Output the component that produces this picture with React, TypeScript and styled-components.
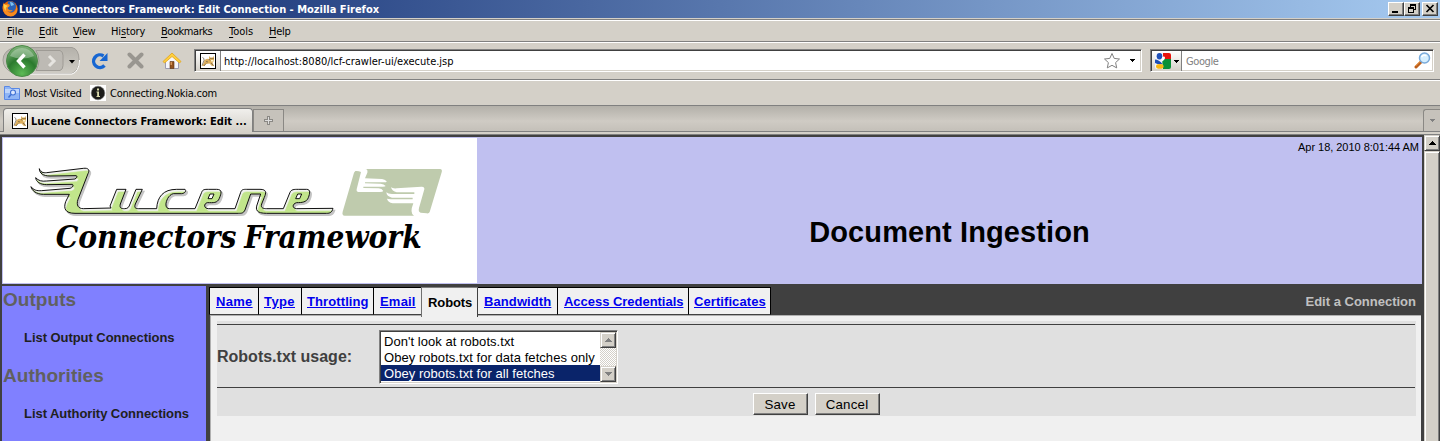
import React from "react";
import styled, { createGlobalStyle, css } from "styled-components";

const Global = createGlobalStyle`
  * { box-sizing: border-box; }
  body { margin: 0; overflow: hidden; background: #d4d0c8; }
  svg { display: block; flex: none; }
`;

const ui = `Tahoma, "DejaVu Sans Condensed", "DejaVu Sans", sans-serif`;
const sans = `"Liberation Sans", Arial, sans-serif`;

const Window = styled.div`
  width: 1440px;
  height: 441px;
  overflow: hidden;
  display: flex;
  flex-direction: column;
  font: 11px/14px ${ui};
  color: #000;
  white-space: nowrap;
`;

const Label = styled.span<{ $ls?: number; $w?: number; $muted?: boolean }>`
  padding-top: 2px;
  letter-spacing: ${(p) => p.$ls ?? 0}px;
  ${(p) => p.$w && css`width: ${p.$w}px; flex: none;`}
  ${(p) => p.$muted && css`color: #808080;`}
`;

const TitleBar = styled.header`
  height: 18px;
  flex: none;
  display: flex;
  align-items: center;
  padding: 0 2px 0 1px;
  background: linear-gradient(90deg, #0a246a, #a6caf0);
  color: #fff;
  font-weight: bold;
`;

const WindowButtons = styled.div`
  margin-left: auto;
  display: flex;
`;

const WindowButton = styled.div<{ $gap?: boolean }>`
  width: 16px;
  height: 14px;
  margin-left: ${(p) => (p.$gap ? 2 : 0)}px;
  background: #d4d0c8;
  border: 1px solid;
  border-color: #fff #404040 #404040 #fff;
  box-shadow: inset -1px -1px #808080;
`;

const MenuBar = styled.nav`
  height: 23px;
  flex: none;
  display: flex;
  align-items: center;
  margin-top: 1px;
  padding-left: 7px;
  border-top: 1px solid #808080;
  border-bottom: 1px solid #808080;
  box-shadow: inset 0 1px #fff;
  u { text-underline-offset: 2px; }
`;

const NavBar = styled.div`
  height: 37px;
  flex: none;
  display: flex;
  align-items: center;
  padding-left: 2px;
  box-shadow: inset 0 1px #fff;
`;

const Field = styled.div<{ $w: number; $ml: number }>`
  width: ${(p) => p.$w}px;
  margin-left: ${(p) => p.$ml}px;
  height: 23px;
  display: flex;
  align-items: center;
  background: #fff;
  border: 1px solid;
  border-color: #808080 #fff #fff #808080;
  box-shadow: inset 1px 1px #404040, inset -1px -1px #d4d0c8;
`;

const FieldButton = styled.div<{ $w: number; $pl: number }>`
  width: ${(p) => p.$w}px;
  height: 20px;
  margin: 1px 0 0 1px;
  display: flex;
  align-items: center;
  padding-left: ${(p) => p.$pl}px;
  background: linear-gradient(#fff, #d4d0c8);
  border-right: 1px solid #808080;
`;

const BookmarkBar = styled.div`
  height: 26px;
  flex: none;
  display: flex;
  align-items: center;
  padding-left: 4px;
  border-top: 1px solid #808080;
  box-shadow: inset 0 1px #fff;
`;

const TabStrip = styled.div`
  height: 27px;
  flex: none;
  display: flex;
  align-items: flex-end;
  padding-left: 3px;
  border-top: 1px solid #808080;
  border-bottom: 1px solid #808080;
  background: linear-gradient(#b3b0a9, #cfcbc4 60%, #c4c0b9);
`;

const BrowserTab = styled.div`
  width: 250px;
  height: 24px;
  margin-bottom: -1px;
  display: flex;
  align-items: center;
  padding-left: 8px;
  font-weight: bold;
  background: linear-gradient(#f0efec, #d4d0c8);
  border: 1px solid #808080;
  border-bottom: 0;
  border-radius: 4px 4px 0 0;
`;

const SmallTab = styled.div<{ $right?: boolean }>`
  width: ${(p) => (p.$right ? 17 : 31)}px;
  height: 22px;
  display: flex;
  align-items: center;
  justify-content: center;
  background: #c6c2bb;
  border: 1px solid #8a8884;
  border-bottom: 0;
  ${(p) => p.$right && css`margin-left: auto; border-right: 0; border-radius: 3px 0 0 0;`}
`;

const StripBase = styled.div`
  height: 3px;
  flex: none;
  background: #d4d0c8;
  border-bottom: 1px solid #808080;
`;

const Viewport = styled.div`
  flex: 1;
  min-height: 0;
  display: flex;
  background: #404040;
`;

const Page = styled.main`
  width: 1424px;
  display: flex;
  flex-direction: column;
  padding: 2px 2px 0 2px;
  font-family: ${sans};
`;

const Banner = styled.div`
  height: 147px;
  flex: none;
  display: flex;
  padding: 1px 0 1px 1px;
  background: #c0c0f0;
`;

const LogoBox = styled.div`
  width: 474px;
  background: #fff;
`;

const BannerTitle = styled.div`
  flex: 1;
  display: flex;
  flex-direction: column;
  text-align: center;
`;

const DateText = styled.div`
  padding: 2px 3px 0 0;
  text-align: right;
  font-size: 11px;
  line-height: 14px;
  letter-spacing: -0.03px;
  height: 73px;
`;

const Heading = styled.h1`
  margin: 0;
  font: bold 29px/42px ${sans};
  letter-spacing: 0.1px;
`;

const Columns = styled.div`
  flex: 1;
  display: flex;
  padding-top: 2px;
`;

const Sidebar = styled.aside`
  width: 204px;
  padding-left: 1px;
  background: #8080ff;
`;

const SideHeading = styled.h2`
  margin: 0;
  height: 43px;
  font: bold 19px/28px ${sans};
  letter-spacing: 0.05px;
  color: #606060;
`;

const SideLink = styled.div`
  height: 33px;
  padding-left: 21px;
  font: bold 13px/17px ${sans};
  letter-spacing: -0.05px;
  color: #202020;
`;

const Main = styled.section`
  flex: 1;
  display: flex;
  flex-direction: column;
  margin-left: 4px;
  margin-right: 1px;
`;

const PageTabs = styled.div`
  height: 29px;
  flex: none;
  display: flex;
  padding-top: 1px;
  margin-left: -1px;
  font: bold 13px/16px ${sans};
`;

const PageTab = styled.div<{ $w: number; $ls: number; $pl: number; $active?: boolean; $joined?: boolean }>`
  width: ${(p) => p.$w}px;
  padding: 6px 0 0 ${(p) => p.$pl}px;
  letter-spacing: ${(p) => p.$ls}px;
  background: #f0f0f0;
  border: 1px solid #000;
  border-right-width: 0;
  border-bottom-color: #404040;
  color: #00e;
  text-decoration: underline;
  &:nth-last-child(2) { border-right-width: 1px; }
  ${(p) => p.$joined && css`border-left-width: 0;`}
  ${(p) => p.$active && css`
    color: #000;
    text-decoration: none;
    padding-top: 7px;
    margin-bottom: -2px;
    z-index: 1;
    border-color: #808080 #404040 transparent #707070;
    border-bottom: 0;
    border-right-width: 1px;
  `}
`;

const TabsCaption = styled.div`
  margin-left: auto;
  padding: 7px 5px 0 0;
  color: #c0c0c0;
`;

const Panel = styled.div`
  flex: 1;
  padding: 5px 5px 0 6px;
  background: #f0f0f0;
  border-top: 1px solid #b0b0b0;
  border-left: 1px solid #b0b0b0;
`;

const Form = styled.div`
  height: 95px;
  padding: 3px 1px 0 0;
  background: #e0e0e0;
`;

const FormRow = styled.div`
  height: 64px;
  display: flex;
  align-items: center;
  border-top: 1px solid #404040;
  border-bottom: 1px solid #404040;
`;

const FieldLabel = styled.div`
  width: 162px;
  padding-top: 2px;
  font: bold 16px/20px ${sans};
  color: #404040;
`;

const ListBox = styled.div`
  width: 239px;
  height: 54px;
  display: flex;
  padding: 1px;
  margin-top: 2px;
  background: #fff;
  border: 1px solid;
  border-color: #808080 #fff #fff #808080;
  box-shadow: inset 1px 1px #404040, inset -1px -1px #d4d0c8;
`;

const Options = styled.div`
  flex: 1;
  padding-top: 1px;
`;

const Option = styled.div<{ $selected?: boolean }>`
  height: 16px;
  padding-left: 3px;
  font: 13px/17px ${sans};
  letter-spacing: 0.05px;
  ${(p) => p.$selected && css`background: #0a246a; color: #fff;`}
`;

const ListScroll = styled.div`
  width: 16px;
  display: flex;
  flex-direction: column;
  justify-content: space-between;
  background: repeating-conic-gradient(#fff 0 25%, #d4d0c8 0 50%) 0 0 / 2px 2px;
`;

const ScrollButton = styled.div`
  height: 16px;
  flex: none;
  display: flex;
  align-items: center;
  justify-content: center;
  background: #d4d0c8;
  border: 1px solid;
  border-color: #d4d0c8 #404040 #404040 #d4d0c8;
  box-shadow: inset 1px 1px #fff, inset -1px -1px #808080;
`;

const Actions = styled.div`
  display: flex;
  justify-content: center;
  gap: 7px;
  padding-top: 5px;
`;

const Button = styled.div<{ $w: number }>`
  width: ${(p) => p.$w}px;
  height: 22px;
  text-align: center;
  font: 13.3px/21px ${sans};
  letter-spacing: 0.2px;
  background: #d4d0c8;
  border: 1px solid;
  border-color: #fff #404040 #404040 #fff;
  box-shadow: inset -1px -1px #808080;
`;

const PageScroll = styled.div`
  width: 16px;
  display: flex;
  flex-direction: column;
  background: #d4d0c8;
`;

const ScrollThumb = styled.div`
  flex: 1;
  margin-bottom: -4px;
  border: 1px solid;
  border-color: #d4d0c8 #404040 #404040 #d4d0c8;
  box-shadow: inset 1px 1px #fff, inset -1px 0 #808080;
`;

const Spacer = styled.div<{ $w: number }>`
  width: ${(p) => p.$w}px;
  flex: none;
`;

const Arrow = ({ up, color = "#000", wide }: { up?: boolean; color?: string; wide?: boolean }) =>
  wide ? (
    <svg width={7} height={4} viewBox="0 0 7 4" shapeRendering="crispEdges">
      <path d={up ? "M3 0h1v1h1v1h1v1h1v1H0V3h1V2h1V1h1z" : "M0 0h7v1H6v1H5v1H4v1H3V3H2V2H1V1H0z"} fill={color} />
    </svg>
  ) : (
    <svg width={5} height={3} viewBox="0 0 5 3" shapeRendering="crispEdges">
      <path d="M0 0h5v1H4v1H3v1H2V2H1V1H0z" fill={color} />
    </svg>
  );

const Firefox = () => (
  <svg width="18" height="18" viewBox="0 0 18 18">
    <circle cx="9" cy="8.5" r="7.5" fill="#e66000" />
    <path d="M7 1.500q6-1.500 8 4q0 5-4 7q-4 0-5-3z" fill="#2a62b8" />
    <path d="M9 2q3 0 4 3l-3 1z" fill="#7dc2f0" />
    <path d="M2 2q0 2 2 3q3-2 5 0l-1 2q-2 0-1 2q2 2 5 1q-2 3-6 1q4 4 8 0q2-3 1-6q3 5 0 9q-5 5-11 0q-3-4-2-9z" fill="#f78b1f" />
    <path d="M3 4q-1 4 2 7q-1-4 2-5z" fill="#ffd24a" />
  </svg>
);

const Tomcat = () => (
  <svg width="16" height="16" viewBox="0 0 16 16">
    <rect x=".5" y=".5" width="15" height="15" fill="#fff" stroke="#000" />
    <path d="M4.500 7q3-2 4.500-1V3l1.500 1.500h2L14 3v5l-1.500 1.500 1.500 3.500h-2l-2.500-2.500-3.500.5L4 13H2l2-3.500z" fill="#dcae5c" />
    <path d="M2.500 4.500q2 .5 1.500 3L2 12.500M6 10.500l-2 2.500m5-7l1 1.500M11 10l2.500 2.500M6 8.500l2 .5" stroke="#6d6250" strokeWidth=".8" fill="none" />
    <path d="M11 7h2.500v1.500H11z" fill="#fff3c8" />
    <path d="M10.500 5h1v1h-1zM12.500 5h1v1h-1z" fill="#6b5830" />
  </svg>
);

const BackForward = () => (
  <svg width="78" height="32" viewBox="0 0 78 32">
    <defs>
      <linearGradient id="well" x2="0" y2="1"><stop stopColor="#b4b1aa" /><stop offset="1" stopColor="#cfccc5" /></linearGradient>
      <radialGradient id="green" cx=".5" cy=".9" r=".85"><stop stopColor="#5dba55" /><stop offset=".55" stopColor="#2b7a2e" /><stop offset="1" stopColor="#79ae74" /></radialGradient>
    </defs>
    <path d="M12 2.500H70Q77 4 77 15T70 28.500H12Q1 24 1 15T12 2.500z" fill="url(#well)" stroke="#a19e98" />
    <path d="M12 29H70Q77 27 77.500 15" fill="none" stroke="#fff" />
    <path d="M34 5.500H58q3 1 3 5v10q0 4-3 5H34q6-10 0-20z" fill="#bdbab4" stroke="#9e9b95" />
    <circle cx="20" cy="16" r="15.500" fill="url(#green)" stroke="#4b8b48" />
    <path d="M8 11Q12 3 20 3t12 8q-12 5-24 0z" fill="#fff" opacity=".3" />
    <path d="M22.500 9.500L16.500 16L22.500 22.500" fill="none" stroke="#fff" strokeWidth="3.400" />
    <path d="M47 11l5 5-5 5" fill="none" stroke="#e6e4e0" strokeWidth="3" />
    <path d="M67 15h6l-3 3.500z" fill="#000" />
  </svg>
);

const Reload = () => (
  <svg width="18" height="18" viewBox="0 0 18 18">
    <path d="M13.500 13.500A6.300 6.300 0 1 1 12.500 4" fill="none" stroke="#1766d2" strokeWidth="3.400" />
    <path d="M16.500 1v8H8.500z" fill="#1766d2" />
  </svg>
);

const Stop = () => (
  <svg width="17" height="17" viewBox="0 0 17 17">
    <path d="M2.500 2.500l12 12m0-12l-12 12" stroke="#999690" strokeWidth="4" strokeLinecap="round" />
  </svg>
);

const Home = () => (
  <svg width="20" height="18" viewBox="0 0 20 18">
    <path d="M3.500 9v7.500h13V9L10 3z" fill="#f6f6fb" stroke="#9b9bb0" />
    <path d="M8 9.500h4v7H8z" fill="#925220" stroke="#603410" strokeWidth=".6" />
    <path d="M8.500 10h1.500v3H8.500z" fill="#d59355" />
    <path d="M1 9.500L10 1l9 8.500-1.500 1.500L10 4.500 2.500 11z" fill="#ffcf3d" stroke="#e0a21c" strokeWidth=".8" />
  </svg>
);

const Star = () => (
  <svg width="18" height="18" viewBox="0 0 18 18">
    <path d="M9 1.500l2.200 4.900 5.300.6-3.900 3.600 1.100 5.300L9 13.300l-4.700 2.600 1.100-5.300L1.500 7l5.300-.6z" fill="#fff" stroke="#808080" strokeLinejoin="round" />
  </svg>
);

const GoogleIcon = () => (
  <svg width="16" height="16" viewBox="0 0 16 16">
    <path d="M0 2q0-2 2-2h6v16H2q-2 0-2-2z" fill="#f4f6fb" />
    <path d="M8 0h6q2 0 2 2v4H8z" fill="#e8120c" />
    <path d="M7 6h9v8q0 2-2 2H8z" fill="#0a9036" />
    <ellipse cx="4.500" cy="3.200" rx="2.800" ry="3.200" fill="#1d4fb8" />
    <path d="M0 6.500q4 0 7.500 4.500q-4 1-7.500-1z" fill="#1d4fb8" />
    <path d="M6.500 6Q7 3 9 3.500T9 7L7 8.500z" fill="#fff" />
    <ellipse cx="4.800" cy="13.400" rx="3.800" ry="2.400" fill="#fbb813" />
  </svg>
);

const Lens = () => (
  <svg width="17" height="17" viewBox="0 0 17 17">
    <path d="M2 15l5-5" stroke="#bd5f1c" strokeWidth="3" strokeLinecap="round" />
    <path d="M1.500 14l5-5" stroke="#f2a04b" />
    <circle cx="10.500" cy="6" r="5" fill="#d5efff" stroke="#79aada" strokeWidth="1.500" />
    <path d="M7.500 5q2-3 5-1" stroke="#fff" strokeWidth="1.500" fill="none" />
  </svg>
);

const SmartFolder = () => (
  <svg width="16" height="14" viewBox="0 0 16 14">
    <path d="M.5 13.500V.5h5l1.500 2h8.500v11z" fill="#8fb5f5" stroke="#5a88e4" />
    <path d="M1 3h14v4H1z" fill="#bcd4fb" />
    <circle cx="9" cy="6.500" r="2.500" fill="#dbe8ff" stroke="#3f70d4" strokeWidth="1.100" />
    <path d="M7 8.500l-2.500 3" stroke="#3f70d4" strokeWidth="1.500" />
  </svg>
);

const InfoBadge = () => (
  <svg width="16" height="16" viewBox="0 0 16 16">
    <path d="M0 0h16v16H0z" fill="#fff" />
    <circle cx="8" cy="8" r="6.800" fill="#1c1c1a" stroke="#777" strokeWidth=".6" />
    <path d="M7 3.500h2v2H7zM6.500 6.500H9V11h1v1H6.500v-1h.7V7.500h-.7z" fill="#dcdcae" />
  </svg>
);

const SCRIPT =
  "M118 116C121 127 129 129 140 128L250 115C265 113 270 120 264 131L234 208C228 226 235 236 250 236L333 234L330 228L350 178L378 178L361 222C358 235 364 236 374 236C384 236 387 231 390 222L408 178L427 178L406 222C402 233 406 236 415 236L470 236C472 200 490 178 530 178L555 178C560 182 555 190 545 191L520 191C500 195 488 236 508 236L585 236L605 187C608 178 614 178 625 178L650 178C668 178 664 190 658 205C652 220 640 218 622 218C610 221 612 236 625 236L705 236L722 187C725 178 730 178 740 178L780 178C800 178 799 188 793 202L785 222C781 234 790 236 800 236L850 236L870 187C874 178 882 178 895 178L920 178C932 178 930 190 925 203C920 217 905 218 890 218C875 222 877 236 890 236L999 235C996 247 990 250 980 250L800 250C770 250 765 240 772 222L782 192L752 192L735 240C730 250 725 250 715 250L225 250C195 250 190 235 197 215L208 193L130 193C110 193 95 182 93 170C100 180 110 183 125 182L210 175C218 173 222 165 217 163L140 164C120 164 108 155 107 143C115 152 125 155 140 153L225 147C232 143 232 137 228 137L150 138C130 138 118 130 118 116Z";

const Logo = () => (
  <svg width="474" height="145" viewBox="9 24 1422 435">
    <defs><clipPath id="script"><path d={SCRIPT} /></clipPath></defs>
    <path d={SCRIPT} transform="translate(5 6)" fill="#c4c4c4" stroke="#c4c4c4" strokeWidth="4" />
    <path d={SCRIPT} fill="#f0f2ee" />
    <g clipPath="url(#script)"><path d={SCRIPT} transform="translate(5 8)" fill="#c1e58b" stroke="#c1e58b" strokeWidth="2" /></g>
    <path d={SCRIPT} fill="none" stroke="#000" strokeWidth="2.800" />
    <path d="M630 192h12l-6 14h-12zM893 192h12l-6 14h-12z" fill="#fff" stroke="#000" strokeWidth="2.800" />
    <path d="M1066 123Q1075 122 1083 126L1070 178Q1068 184 1074 186H1140Q1148 186 1150 183Q1146 176 1136 175L1090 174V170H1148Q1156 170 1157 168Q1152 162 1142 161L1095 160V157H1158Q1160 156 1160 154Q1154 148 1146 147L1095 145L1102 128Q1104 117 1096 117H1320Q1328 118 1325 127L1289 246Q1287 251 1280 250L1262 248Q1254 246 1257 234L1273 178Q1274 169 1264 170L1190 175Q1178 176 1173 172Q1176 184 1190 187H1243V192H1176Q1164 192 1159 187Q1160 200 1176 203H1238V208H1172L1161 206Q1164 217 1178 220H1240Q1228 250 1242 257H1034Q1025 256 1028 245L1062 128Z" fill="#bfcbad" />
    <text x="167" y="354" fontFamily="DejaVu Serif" fontWeight="bold" fontStyle="italic" fontSize="93" textLength="542" lengthAdjust="spacingAndGlyphs">Connectors</text>
    <text x="733" y="354" fontFamily="DejaVu Serif" fontWeight="bold" fontStyle="italic" fontSize="93" textLength="532" lengthAdjust="spacingAndGlyphs">Framework</text>
  </svg>
);

const menus: [string, string, string, number, number][] = [
  ["", "F", "ile", 32, 0], ["", "E", "dit", 34, -0.1], ["", "V", "iew", 38, -0.3], ["Hi", "s", "tory", 50, -0.15],
  ["", "B", "ookmarks", 68, -0.45], ["", "T", "ools", 40, 0], ["", "H", "elp", 40, -0.3],
];

// label, width, letter spacing, left padding
const tabs: [string, number, number, number][] = [
  ["Name", 49, 0.3, 6], ["Type", 43, 0.4, 5], ["Throttling", 72, 0.1, 5], ["Email", 48, 0.2, 6], ["Robots", 57, -0.1, 6],
  ["Bandwidth", 79, 0.1, 6], ["Access Credentials", 131, -0.03, 6], ["Certificates", 83, 0.08, 5],
];

export default function App() {
  return (
    <Window>
      <Global />
      <TitleBar>
        <Firefox />
        <Label>Lucene Connectors Framework: Edit Connection - Mozilla Firefox</Label>
        <WindowButtons>
          <WindowButton><svg width="14" height="12"><path d="M3 8h6v2H3z" /></svg></WindowButton>
          <WindowButton>
            <svg width="14" height="12" shapeRendering="crispEdges">
              <path d="M5 1h6v6H9V6h1V3H6v1H5zM3 4h6v6H3zM4 6v3h4V6z" fillRule="evenodd" />
            </svg>
          </WindowButton>
          <WindowButton $gap><svg width="14" height="12"><path d="M3.500 2l7 7m0-7l-7 7" stroke="#000" strokeWidth="1.700" /></svg></WindowButton>
        </WindowButtons>
      </TitleBar>
      <MenuBar>
        {menus.map(([a, u, b, w, ls]) => <Label key={u + b} $w={w} $ls={ls}>{a}<u>{u}</u>{b}</Label>)}
      </MenuBar>
      <NavBar>
        <BackForward />
        <Spacer $w={11} /><Reload />
        <Spacer $w={18} /><Stop />
        <Spacer $w={18} /><Home />
        <Field $w={948} $ml={12}>
          <FieldButton $w={25} $pl={4}><Tomcat /></FieldButton>
          <Spacer $w={3} />
          <Label $w={229}>http://localhost:8080/lcf-crawler-ui/execute.jsp</Label>
          <Spacer $w={650} /><Star />
          <Spacer $w={9} /><Arrow />
        </Field>
        <Field $w={284} $ml={8}>
          <FieldButton $w={30} $pl={3}><GoogleIcon /><Spacer $w={3} /><Arrow /></FieldButton>
          <Spacer $w={4} />
          <Label $w={228} $ls={-0.4} $muted>Google</Label>
          <Lens />
        </Field>
      </NavBar>
      <BookmarkBar>
        <SmartFolder /><Spacer $w={4} /><Label $w={66} $ls={-0.22}>Most Visited</Label>
        <InfoBadge /><Spacer $w={4} /><Label $ls={-0.24}>Connecting.Nokia.com</Label>
      </BookmarkBar>
      <TabStrip>
        <BrowserTab><Tomcat /><Spacer $w={3} /><Label>Lucene Connectors Framework: Edit ...</Label></BrowserTab>
        <SmallTab>
          <svg width="9" height="9">
            <path d="M3 0h3v3h3v3H6v3H3V6H0V3h3z" fill="#8a8884" />
            <path d="M4 1h1v3h3v1H5v3H4V5H1V4h3z" fill="#ddd" />
          </svg>
        </SmallTab>
        <SmallTab $right><Arrow color="#808080" /></SmallTab>
      </TabStrip>
      <StripBase />
      <Viewport>
        <Page>
          <Banner>
            <LogoBox><Logo /></LogoBox>
            <BannerTitle>
              <DateText>Apr 18, 2010 8:01:44 AM</DateText>
              <Heading>Document Ingestion</Heading>
            </BannerTitle>
          </Banner>
          <Columns>
            <Sidebar>
              <SideHeading>Outputs</SideHeading>
              <SideLink>List Output Connections</SideLink>
              <SideHeading>Authorities</SideHeading>
              <SideLink>List Authority Connections</SideLink>
            </Sidebar>
            <Main>
              <PageTabs>
                {tabs.map(([t, w, ls, pl], i) => (
                  <PageTab key={t} $w={w} $ls={ls} $pl={pl} $active={t === "Robots"} $joined={tabs[i - 1]?.[0] === "Robots"}>
                    {t}
                  </PageTab>
                ))}
                <TabsCaption>Edit a Connection</TabsCaption>
              </PageTabs>
              <Panel>
                <Form>
                  <FormRow>
                    <FieldLabel>Robots.txt usage:</FieldLabel>
                    <ListBox>
                      <Options>
                        <Option>Don't look at robots.txt</Option>
                        <Option>Obey robots.txt for data fetches only</Option>
                        <Option $selected>Obey robots.txt for all fetches</Option>
                      </Options>
                      <ListScroll>
                        <ScrollButton><Arrow up wide color="#808080" /></ScrollButton>
                        <ScrollButton><Arrow wide color="#808080" /></ScrollButton>
                      </ListScroll>
                    </ListBox>
                  </FormRow>
                  <Actions><Button $w={55}>Save</Button><Button $w={65}>Cancel</Button></Actions>
                </Form>
              </Panel>
            </Main>
          </Columns>
        </Page>
        <PageScroll>
          <ScrollButton><Arrow up wide /></ScrollButton>
          <ScrollThumb />
        </PageScroll>
      </Viewport>
    </Window>
  );
}
